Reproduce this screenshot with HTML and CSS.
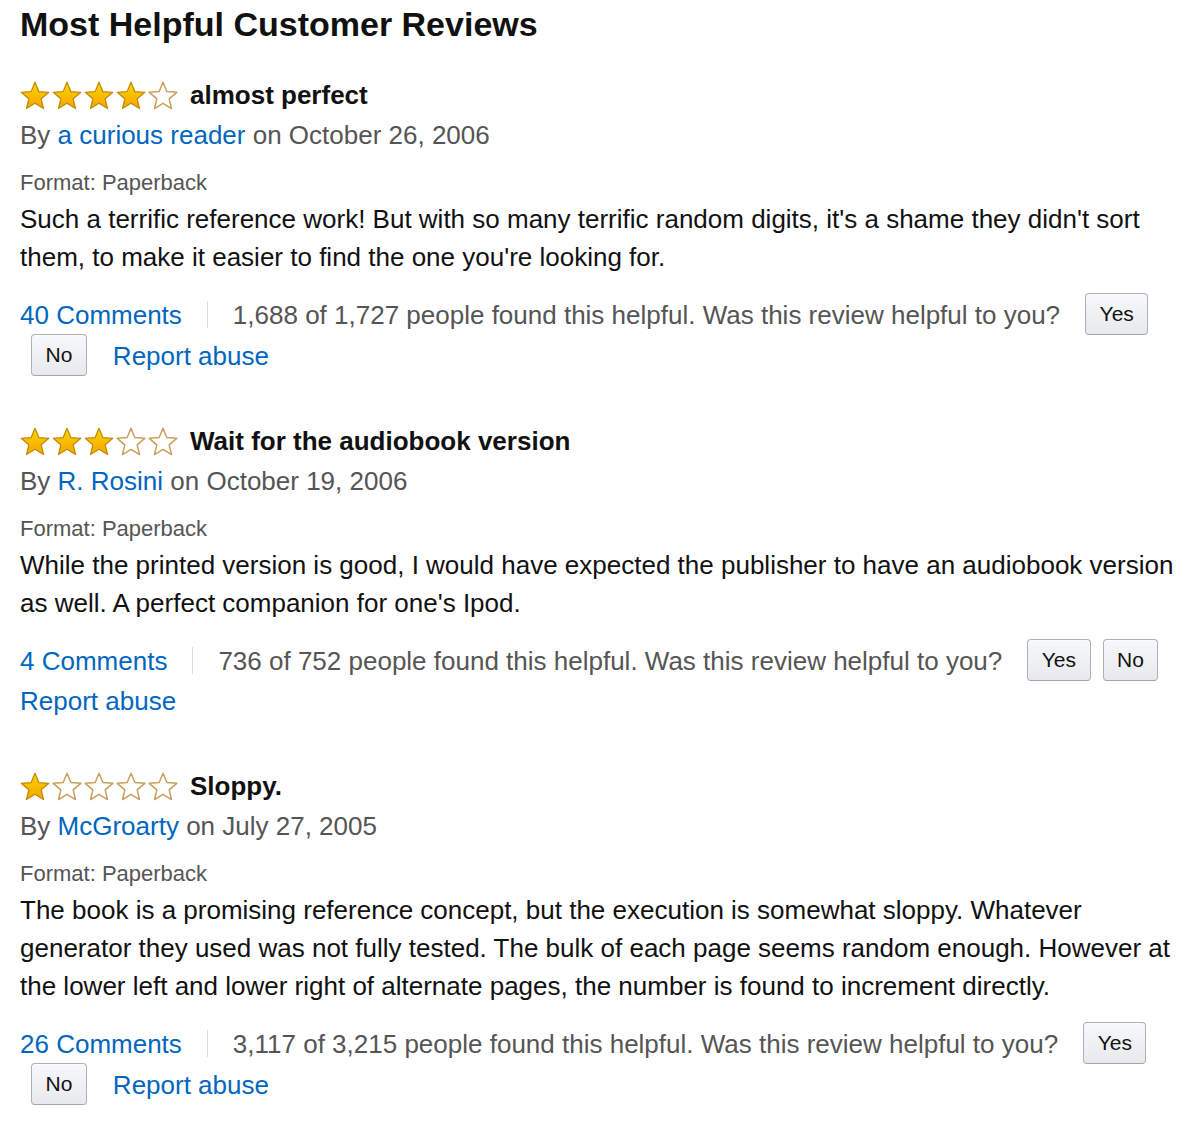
FILE: index.html
```html
<!DOCTYPE html>
<html lang="en">
<head>
<meta charset="utf-8">
<title>Most Helpful Customer Reviews</title>
<link rel="stylesheet" href="styles.css">
</head>
<body>
<svg class="defs" width="0" height="0" aria-hidden="true">
  <defs>
    <linearGradient id="gold" x1="0" y1="0" x2="0" y2="1">
      <stop offset="0" stop-color="#ffd400"/>
      <stop offset="1" stop-color="#f2a600"/>
    </linearGradient>
    <symbol id="star-full" viewBox="0 0 30 29">
      <polygon points="15,1.3 18.82,10.54 28.79,11.32 21.18,17.81 23.52,27.53 15,22.3 6.48,27.53 8.82,17.81 1.21,11.32 11.18,10.54" fill="url(#gold)" stroke="#c48a06" stroke-width="1.3" stroke-linejoin="round"/>
    </symbol>
    <symbol id="star-empty" viewBox="0 0 30 29">
      <polygon points="15,1.3 18.82,10.54 28.79,11.32 21.18,17.81 23.52,27.53 15,22.3 6.48,27.53 8.82,17.81 1.21,11.32 11.18,10.54" fill="#fff" stroke="#c9a05a" stroke-width="1.5" stroke-linejoin="round"/>
    </symbol>
  </defs>
</svg>
<div class="page">
  <h2 class="heading">Most Helpful Customer Reviews</h2>

  <div class="review">
    <div class="title-row">
      <span class="stars">
        <svg class="star"><use href="#star-full"/></svg><svg class="star"><use href="#star-full"/></svg><svg class="star"><use href="#star-full"/></svg><svg class="star"><use href="#star-full"/></svg><svg class="star"><use href="#star-empty"/></svg>
      </span>
      <span class="title">almost perfect</span>
    </div>
    <div class="byline">By <a class="link" href="#">a curious reader</a> on October 26, 2006</div>
    <div class="format">Format: Paperback</div>
    <div class="body">Such a terrific reference work! But with so many terrific random digits, it's a shame they didn't sort them, to make it easier to find the one you're looking for.</div>
    <div class="actions">
      <a class="link comments" href="#">40 Comments</a>
      <span class="sep"></span>
      <span class="helpful">1,688 of 1,727 people found this helpful. Was this review helpful to you?</span>
      <button class="btn yes">Yes</button>
      <button class="btn no">No</button>
      <a class="link report" href="#">Report abuse</a>
    </div>
  </div>

  <div class="review">
    <div class="title-row">
      <span class="stars">
        <svg class="star"><use href="#star-full"/></svg><svg class="star"><use href="#star-full"/></svg><svg class="star"><use href="#star-full"/></svg><svg class="star"><use href="#star-empty"/></svg><svg class="star"><use href="#star-empty"/></svg>
      </span>
      <span class="title">Wait for the audiobook version</span>
    </div>
    <div class="byline">By <a class="link" href="#">R. Rosini</a> on October 19, 2006</div>
    <div class="format">Format: Paperback</div>
    <div class="body">While the printed version is good, I would have expected the publisher to have an audiobook version as well. A perfect companion for one's Ipod.</div>
    <div class="actions">
      <a class="link comments" href="#">4 Comments</a>
      <span class="sep"></span>
      <span class="helpful">736 of 752 people found this helpful. Was this review helpful to you?</span>
      <button class="btn yes">Yes</button>
      <button class="btn no">No</button>
      <a class="link report" href="#">Report abuse</a>
    </div>
  </div>

  <div class="review">
    <div class="title-row">
      <span class="stars">
        <svg class="star"><use href="#star-full"/></svg><svg class="star"><use href="#star-empty"/></svg><svg class="star"><use href="#star-empty"/></svg><svg class="star"><use href="#star-empty"/></svg><svg class="star"><use href="#star-empty"/></svg>
      </span>
      <span class="title">Sloppy.</span>
    </div>
    <div class="byline">By <a class="link" href="#">McGroarty</a> on July 27, 2005</div>
    <div class="format">Format: Paperback</div>
    <div class="body">The book is a promising reference concept, but the execution is somewhat sloppy. Whatever generator they used was not fully tested. The bulk of each page seems random enough. However at the lower left and lower right of alternate pages, the number is found to increment directly.</div>
    <div class="actions">
      <a class="link comments" href="#">26 Comments</a>
      <span class="sep"></span>
      <span class="helpful">3,117 of 3,215 people found this helpful. Was this review helpful to you?</span>
      <button class="btn yes">Yes</button>
      <button class="btn no">No</button>
      <a class="link report" href="#">Report abuse</a>
    </div>
  </div>
</div>
</body>
</html>
```

FILE: styles.css
```css
html, body {
  margin: 0;
  padding: 0;
  background: #fff;
}

body {
  font-family: "Liberation Sans", Arial, sans-serif;
  color: #111;
}

.defs {
  position: absolute;
  width: 0;
  height: 0;
  overflow: hidden;
}

.page {
  padding: 0 2px 0 20px;
}

.heading {
  margin: 5px 0 0;
  font-size: 34px;
  line-height: 39px;
  font-weight: bold;
  color: #111;
}

.review {
  margin-top: 31px;
}

.review + .review {
  margin-top: 45px;
}

.title-row {
  display: flex;
  align-items: center;
  height: 40px;
}

.stars {
  display: flex;
  align-items: center;
}

.star {
  width: 30px;
  height: 29px;
  margin-right: 2px;
  display: block;
}

.title {
  margin-left: 10px;
  font-size: 26px;
  line-height: 40px;
  font-weight: bold;
  color: #111;
}

.byline {
  font-size: 26px;
  line-height: 40px;
  color: #555;
}

.link {
  color: #0066c0;
  text-decoration: none;
}

.format {
  margin-top: 13px;
  font-size: 22px;
  line-height: 30px;
  color: #555;
}

.body {
  margin-top: 2px;
  font-size: 26px;
  line-height: 38px;
  color: #111;
}

.actions {
  margin-top: 18px;
  display: flex;
  flex-wrap: wrap;
  align-items: center;
  font-size: 26px;
  line-height: 40px;
  color: #555;
}

.sep {
  width: 1px;
  height: 27px;
  background: #ddd;
  margin: 0 25px;
}

.helpful {
  margin-right: 14px;
}

.btn {
  height: 42px;
  margin: -1px 1px 0 11px;
  padding: 0 13.5px;
  font-family: "Liberation Sans", Arial, sans-serif;
  font-size: 21px;
  line-height: 40px;
  color: #111;
  background: linear-gradient(#f7f8fa, #e7e9ec);
  border: 1px solid #adb1b8;
  border-bottom-color: #a2a6ac;
  border-radius: 4px;
  box-shadow: inset 0 1px 0 rgba(255, 255, 255, 0.6);
}

.btn.no {
  margin-right: 26px;
}
```
